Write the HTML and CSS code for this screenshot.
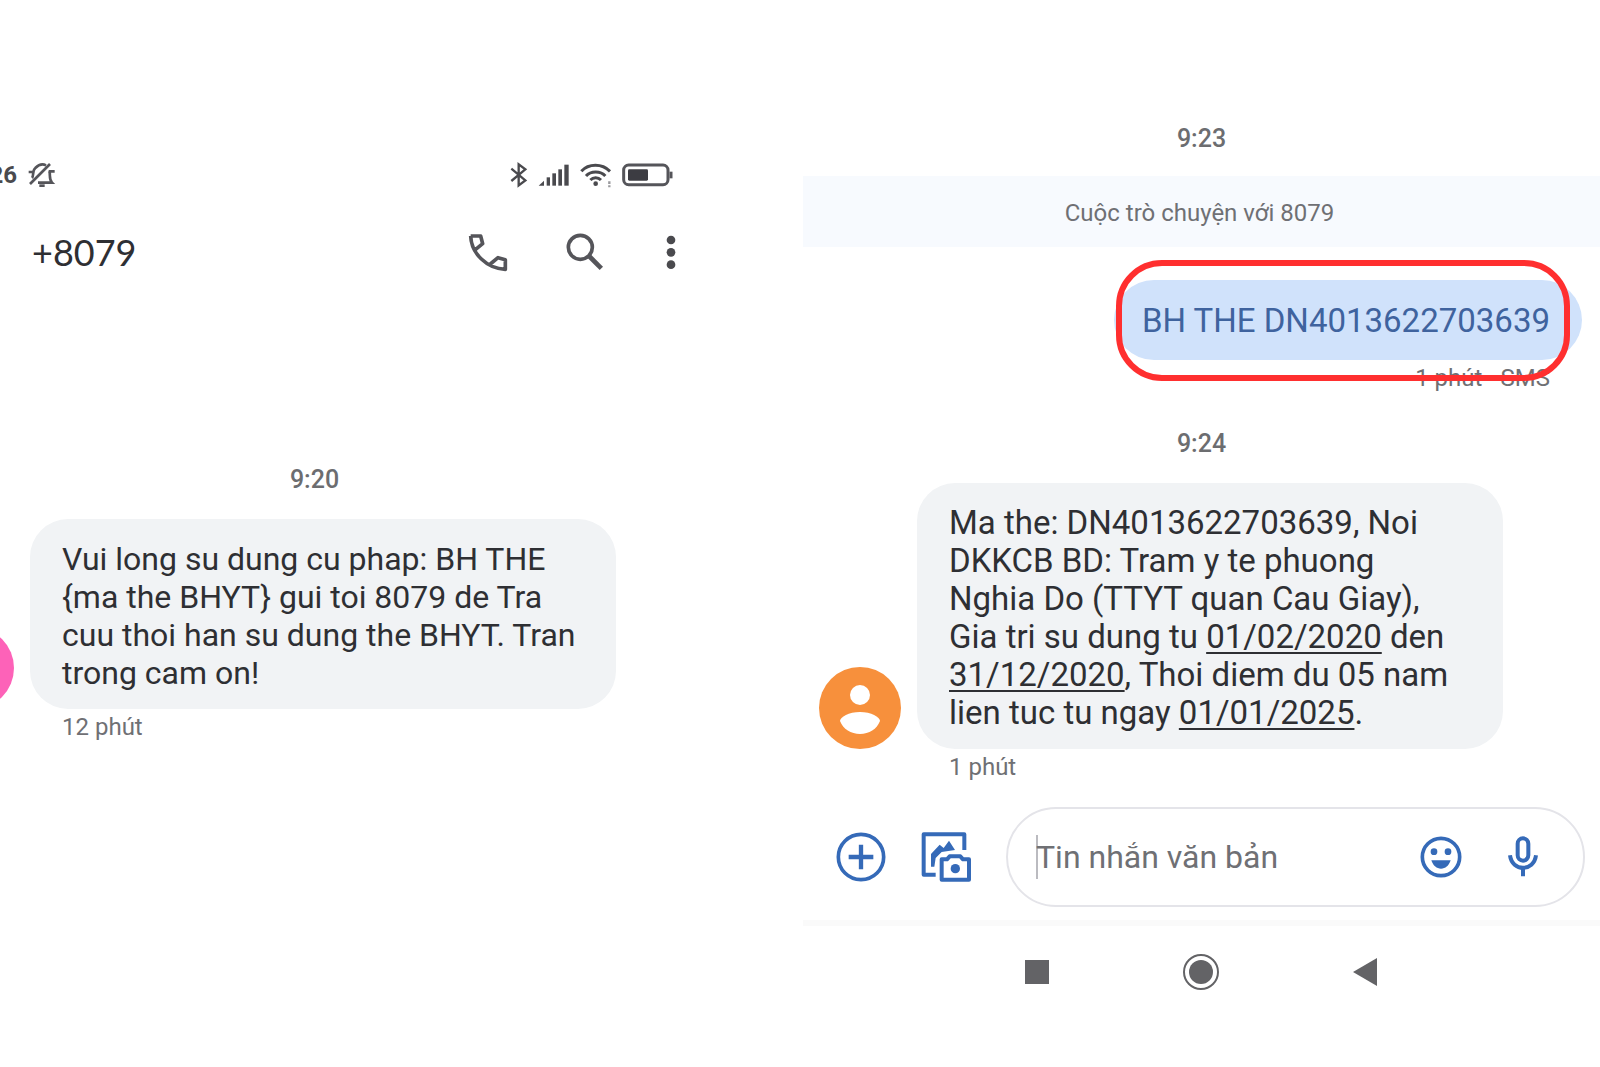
FILE: index.html
```html
<!DOCTYPE html>
<html lang="vi">
<head>
    <meta charset="UTF-8">
    <meta name="viewport" content="width=device-width, initial-scale=1.0">
    <title>8079</title>
    <link rel="stylesheet" href="styles.css">
</head>
<body>
    <main class="screens">
        <section class="screen">
            <div class="status-bar">
                <span class="clock">26</span>
                <svg class="bell" width="28" height="26" viewBox="0 0 84 78" fill="none" stroke="#55555a" stroke-width="8">
                    <path d="M6 66 L66 6 M12 48 C18 42 12 26 22 18 C34 6 46 6 54 10 M2 30 L14 30 M64 27 C68 40 62 52 72 62 L30 62 M62 28 L80 28"/>
                    <path d="M34 71 L50 71"/>
                </svg>
                <div class="status-icons">
                    <svg width="18" height="26" viewBox="0 0 54 78" fill="none" stroke="#4a4a4e" stroke-width="7">
                        <path d="M4 20 L46 55 L26 70 L26 7 L46 22 L4 57"/>
                    </svg>
                    <svg width="32" height="26" viewBox="0 0 96 78" fill="#4a4a4e">
                        <path d="M2 71 L18 56 V71Z"/>
                        <rect x="26" y="46" width="10" height="25"/>
                        <rect x="43" y="34" width="11" height="37"/>
                        <rect x="61" y="22" width="11" height="49"/>
                        <rect x="79" y="8" width="13" height="63"/>
                    </svg>
                    <svg width="32" height="26" viewBox="0 0 96 78" fill="none" stroke="#4a4a4e" stroke-width="9">
                        <path d="M4 28 C26 4 66 4 90 28 M18 42 C32 26 62 26 76 42 M31 54 C40 45 54 45 63 54"/>
                        <circle cx="47" cy="65" r="7" fill="#4a4a4e" stroke="none"/>
                        <path d="M88 58 V66 M88 70 V76" stroke="#9a9a9e" stroke-width="7"/>
                    </svg>
                    <svg width="52" height="26" viewBox="0 0 156 78" fill="none" stroke="#55555a" stroke-width="9">
                        <rect x="5" y="9" width="133" height="59" rx="15"/>
                        <rect x="18" y="22" width="60" height="34" rx="4" fill="#3c3c42" stroke="none"/>
                        <path d="M147 29 V49"/>
                    </svg>
                </div>
            </div>

            <header class="chat-header">
                <h1>+8079</h1>
                <div class="actions">
                    <button type="button" aria-label="Gọi">
                        <svg width="50" height="50" viewBox="0 0 150 150" fill="none" stroke="#55555a" stroke-width="11" stroke-linejoin="round">
                            <path d="M23 27 L53 27 L59 50 L38 67 M23 27 C25 80 72 125 127 127 L127 98 L105 92 L82 111"/>
                        </svg>
                    </button>
                    <button type="button" aria-label="Tìm kiếm">
                        <svg width="50" height="50" viewBox="0 0 150 150" fill="none" stroke="#55555a">
                            <circle cx="52" cy="61" r="36" stroke-width="11"/>
                            <path d="M78 87 L115 124" stroke-width="14"/>
                        </svg>
                    </button>
                    <button type="button" aria-label="Tùy chọn khác">
                        <svg width="16" height="50" viewBox="0 0 48 150" fill="#4a4a4e">
                            <circle cx="24" cy="39" r="13"/>
                            <circle cx="24" cy="76" r="13"/>
                            <circle cx="24" cy="113" r="13"/>
                        </svg>
                    </button>
                </div>
            </header>

            <div class="thread thread-left">
                <time class="stamp">9:20</time>
                <div class="message">
                    <div class="avatar pink"></div>
                    <p class="bubble">Vui long su dung cu phap: BH THE<br>{ma the BHYT} gui toi 8079 de Tra<br>cuu thoi han su dung the BHYT. Tran<br>trong cam on!</p>
                </div>
                <p class="meta">12 phút</p>
            </div>
        </section>

        <section class="screen screen-right">
            <time class="stamp">9:23</time>
            <p class="banner">Cuộc trò chuyện với 8079</p>

            <div class="sent">
                <p class="bubble-sent">BH THE DN4013622703639</p>
                <p class="meta-sent">1 phút · SMS</p>
            </div>

            <div class="thread">
                <time class="stamp">9:24</time>
                <div class="message">
                    <div class="avatar">
                        <svg width="82" height="82" viewBox="0 0 82 82" fill="#fff">
                            <circle cx="41" cy="28" r="10"/>
                            <path d="M41 45 C52 45 61 50 61 54 C58 62 50 67 41 67 C32 67 24 62 21 54 C21 50 30 45 41 45Z"/>
                        </svg>
                    </div>
                    <p class="bubble">Ma the: DN4013622703639, Noi<br>DKKCB BD: Tram y te phuong<br>Nghia Do (TTYT quan Cau Giay),<br>Gia tri su dung tu <a href="#">01/02/2020</a> den<br><a href="#">31/12/2020</a>, Thoi diem du 05 nam<br>lien tuc tu ngay <a href="#">01/01/2025</a>.</p>
                </div>
                <p class="meta">1 phút</p>
            </div>

            <form class="composer">
                <button type="button" aria-label="Thêm">
                    <svg width="50" height="50" viewBox="0 0 150 150" fill="none" stroke="#356ab8" stroke-width="11">
                        <circle cx="75" cy="75" r="68"/>
                        <path d="M75 38 V112 M38 75 H112" stroke-width="13"/>
                    </svg>
                </button>
                <button type="button" aria-label="Ảnh">
                    <svg width="50" height="50" viewBox="0 0 150 150" fill="none" stroke="#356ab8" stroke-width="12" stroke-linejoin="round">
                        <path d="M130 54 V7 H8 V128 H44"/>
                        <path d="M30 104 V66 L56 38 L68 48 L84 26 L102 54 L62 60 L44 78 L40 104Z" fill="#356ab8" stroke="none"/>
                        <path d="M62 82 H78 L86 73 H118 L126 82 H144 V143 H62Z"/>
                        <circle cx="103" cy="110" r="14" fill="#356ab8" stroke="none"/>
                    </svg>
                </button>
                <div class="field">
                    <span class="caret"></span>
                    <input type="text" aria-label="Tin nhắn văn bản" placeholder="Tin nhắn văn bản">
                    <button type="button" aria-label="Biểu tượng cảm xúc">
                        <svg width="42" height="42" viewBox="0 0 126 126" fill="none" stroke="#356ab8" stroke-width="11">
                            <circle cx="63" cy="63" r="56"/>
                            <g fill="#356ab8" stroke="none">
                                <circle cx="42" cy="47" r="10"/>
                                <circle cx="84" cy="47" r="10"/>
                                <path d="M34 73 H92 C86 90 76 98 63 98 C50 98 40 90 34 73Z"/>
                            </g>
                        </svg>
                    </button>
                    <button type="button" aria-label="Ghi âm">
                        <svg width="30" height="42" viewBox="0 0 90 126" fill="none" stroke="#356ab8" stroke-width="12">
                            <rect x="29" y="7" width="32" height="67" rx="16"/>
                            <path d="M6 58 C12 108 78 108 84 58 M45 96 V121"/>
                        </svg>
                    </button>
                </div>
            </form>

            <nav class="nav-bar">
                <button type="button" aria-label="Gần đây">
                    <svg width="36" height="36" viewBox="0 0 36 36" fill="#636366"><rect x="6" y="6" width="24" height="24"/></svg>
                </button>
                <button type="button" aria-label="Trang chủ">
                    <svg width="36" height="36" viewBox="0 0 36 36" fill="#636366">
                        <circle cx="18" cy="18" r="12"/>
                        <circle cx="18" cy="18" r="17" fill="none" stroke="#636366" stroke-width="2"/>
                    </svg>
                </button>
                <button type="button" aria-label="Quay lại">
                    <svg width="36" height="36" viewBox="0 0 36 36" fill="#636366"><path d="M6 18 L30 4 V32Z"/></svg>
                </button>
            </nav>
        </section>
    </main>
</body>
</html>
```

FILE: styles.css
```css
* { margin: 0; padding: 0; box-sizing: border-box; }
body {
    font-family: Roboto, "Noto Sans", sans-serif;
    background: #fff;
    color: #2e2f33;
    overflow-x: hidden;
}
button {
    display: block;
    background: none;
    border: none;
    cursor: pointer;
}
svg { display: block; }

.screens {
    display: grid;
    grid-template-columns: 1fr 1fr;
    gap: 6px;
}
.screen {
    min-width: 0;
    padding-top: 162px;
    overflow: hidden;
}
.screen-right { padding-top: 124px; }

/* status bar */
.status-bar {
    display: flex;
    align-items: center;
    gap: 11px;
    height: 26px;
    padding-right: 123px;
}
.clock {
    display: flex;
    justify-content: flex-end;
    width: 17px;
    font-size: 24px;
    font-weight: 700;
    color: #4a4a4e;
}
.status-icons {
    display: flex;
    gap: 10px;
    margin-left: auto;
}

.chat-header {
    display: flex;
    align-items: center;
    justify-content: space-between;
    margin-top: 39px;
    padding: 0 118px 0 32px;
}
.chat-header h1 {
    font-family: Lato, sans-serif;
    font-size: 36px;
    font-weight: 400;
}
.actions { display: flex; gap: 50px; }

/* messages */
.stamp {
    display: block;
    font-size: 25px;
    font-weight: 500;
    line-height: 30px;
    text-align: center;
    color: #6c6d70;
}
.thread { padding: 36px 16px 0; }
.thread-left {
    margin-left: -84px;
    padding-top: 188px;
}
.thread-left .stamp { padding-right: 84px; }
.message {
    display: flex;
    align-items: flex-end;
    gap: 16px;
    margin-top: 24px;
}
.avatar {
    flex: none;
    width: 82px;
    height: 82px;
    border-radius: 50%;
    background: #f7903c;
}
.avatar.pink { background: #fd62b8; }
.bubble {
    width: 586px;
    padding: 21px 32px 17px;
    border-radius: 38px;
    background: #f1f3f5;
    font-size: 33px;
    line-height: 38px;
    white-space: nowrap;
}
.thread-left .bubble { font-size: 32px; }
.bubble a {
    color: inherit;
    text-decoration-thickness: 2px;
    text-underline-offset: 4px;
}
.meta, .meta-sent {
    margin-top: 3px;
    font-size: 24px;
    line-height: 30px;
    color: #6f7074;
}
.meta { padding-left: 130px; }
.banner {
    margin-top: 22px;
    padding: 22px 4px 19px 0;
    background: #f7fafe;
    font-size: 24px;
    line-height: 30px;
    text-align: center;
    color: #6f7074;
}
.sent {
    display: flex;
    flex-direction: column;
    align-items: flex-end;
    padding: 33px 18px 0;
}
.bubble-sent {
    position: relative;
    padding: 22px 32px 20px 28px;
    border-radius: 40px;
    background: #d0e2fb;
    font-size: 33px;
    line-height: 38px;
    color: #3f639e;
}
/* highlight ring, drawn over the bubble and its caption */
.bubble-sent::after {
    content: "";
    position: absolute;
    inset: -20px 12px -21px 2px;
    border: 6px solid #ff2f2f;
    border-radius: 46px;
}
.meta-sent { padding-right: 32px; }

/* composer */
.composer {
    display: flex;
    align-items: center;
    gap: 35px;
    margin-top: 25px;
    padding: 0 15px 13px 33px;
    border-bottom: 6px solid #fafafa;
}
.field {
    display: flex;
    flex: 1;
    align-items: center;
    gap: 46px;
    min-width: 0;
    height: 100px;
    padding: 0 45px 0 28px;
    border: 2px solid #e4e4e9;
    border-radius: 50px;
}
.caret {
    width: 2px;
    height: 44px;
    margin-right: -48px;
    background: #bbbbc0;
}
.field input {
    flex: 1;
    min-width: 0;
    border: none;
    outline: none;
    background: none;
    font-family: inherit;
    font-size: 32px;
    color: #2e2f33;
}
.field input::placeholder { color: #6f7074; opacity: 1; }

.nav-bar {
    display: flex;
    justify-content: center;
    gap: 128px;
    padding: 28px 2px 28px 0;
}
```
